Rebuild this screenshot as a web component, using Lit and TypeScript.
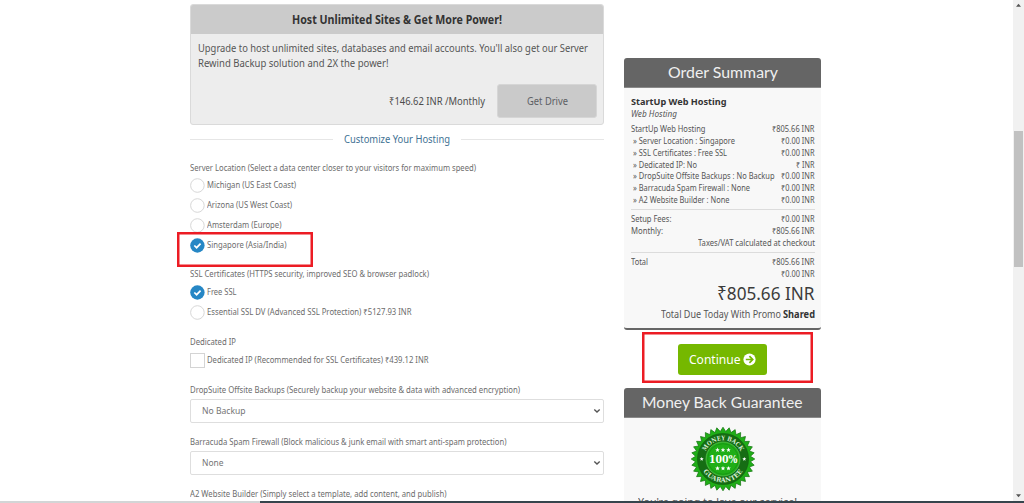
import { LitElement, html, svg, css } from "lit";
import { customElement, property } from "lit/decorators.js";

/** Single line of text condensed horizontally to a given measure. */
@customElement("fit-text")
class FitText extends LitElement {
  @property({ type: Number }) w = 0;
  static styles = css`
    :host { display: block; flex: none; white-space: nowrap; }
    span { display: inline-block; transform-origin: 0 50%; white-space: pre; vertical-align: top; }
  `;
  updated() {
    const s = this.renderRoot.querySelector("span") as HTMLElement;
    this.style.width = `${this.w}px`;
    s.style.transform = "none";
    const natural = s.getBoundingClientRect().width;
    if (natural) s.style.transform = `scaleX(${this.w / natural})`;
  }
  render() {
    return html`<span>${this.textContent}</span>`;
  }
}

const t = (text: string, w: number, cls = "") => html`<fit-text class=${cls} .w=${w}>${text}</fit-text>`;

@customElement("guarantee-seal")
class GuaranteeSeal extends LitElement {
  static styles = css`
    :host { display: block; width: 64px; height: 64px; flex: none; }
    svg { display: block; overflow: visible; }
    text { font-family: "DejaVu Serif", serif; font-weight: bold; fill: #fff; }
    .ring { font-size: 6.3px; fill: #d9efd6; }
    .pct { font-size: 11.5px; }
  `;
  private star(x: number, y: number, r: number) {
    const p = Array.from({ length: 10 }, (_, i) => {
      const a = (i * Math.PI) / 5 - Math.PI / 2;
      const q = i % 2 ? r * 0.45 : r;
      return `${(x + q * Math.cos(a)).toFixed(2)},${(y + q * Math.sin(a)).toFixed(2)}`;
    }).join(" ");
    return svg`<polygon points=${p} fill="#fff"/>`;
  }
  render() {
    const n = 32;
    const edge = Array.from({ length: n * 2 }, (_, i) => {
      const a = (i * Math.PI) / n - Math.PI / 2;
      const r = i % 2 ? 27.6 : 31.8;
      return `${(r * Math.cos(a)).toFixed(2)},${(r * Math.sin(a)).toFixed(2)}`;
    }).join(" ");
    return html`<svg width="64" height="64" viewBox="-32 -32 64 64">
      <polygon points=${edge} fill="#1fae17" stroke="#12720f" stroke-width=".7"/>
      <circle r="25.6" fill="#166d14" stroke="#0e5a0d" stroke-width=".5"/>
      <circle r="17" fill="#1fae17" stroke="#5fc458" stroke-width=".7"/>
      <circle r="15.3" fill="none" stroke="#128a10" stroke-width=".6"/>
      <path id="up" d="M-18.8 0A18.8 18.8 0 0 1 18.8 0" fill="none"/>
      <path id="dn" d="M-23.3 0A23.3 23.3 0 0 0 23.3 0" fill="none"/>
      <text class="ring" text-anchor="middle"><textPath href="#up" startOffset="50%" textLength="43" lengthAdjust="spacingAndGlyphs">MONEY BACK</textPath></text>
      <text class="ring" text-anchor="middle"><textPath href="#dn" startOffset="50%" textLength="47" lengthAdjust="spacingAndGlyphs">GUARANTEE</textPath></text>
      <text class="pct" x="-14" y="4" textLength="28.5" lengthAdjust="spacingAndGlyphs">100%</text>
      ${this.star(-21.3, 0, 2.1)}${this.star(21.3, 0, 2.1)}
      ${[-5.5, 0, 5.5].map((x) => svg`${this.star(x, -9, 2.4)}${this.star(x, 9.3, 2.4)}`)}
    </svg>`;
  }
}

@customElement("app-root")
class AppRoot extends LitElement {
  static styles = css`
    :host { display: block; position: relative; width: 1024px; height: 503px; overflow: hidden; background: #fff;
      font-family: "Noto Sans", "Open Sans", sans-serif; font-size: 8.2px; line-height: 14px; color: #6c6c6c; }
    * { box-sizing: border-box; }
    .page { display: flex; height: 503px; align-items: flex-start; padding-left: 190px; }
    .main { width: 414px; padding-top: 4px; flex: none; }
    .side { width: 197px; margin-left: 20px; padding-top: 58px; flex: none; }
    .offer { height: 121px; background: #ededed; border: 1px solid #dadada; border-radius: 3px; overflow: hidden; }
    .offer-head { height: 29px; background: #cbcbcb; display: flex; justify-content: center; padding-top: 6px; color: #333;
      font-size: 12px; font-weight: 700; line-height: 18px; }
    .offer-body { padding: 7px 0 0 6.5px; font-size: 10.4px; line-height: 15px; color: #555; }
    .buy { display: flex; margin: 13px 6px 0 0; justify-content: flex-end; align-items: center; gap: 12px; color: #4c4c4c; }
    .drive { width: 100px; height: 34px; background: #cacaca; border: 1px solid #d6d6d6; border-radius: 3px; display: flex;
      align-items: center; justify-content: center; color: #5d6064; font-size: 10px; }
    .divider { display: flex; align-items: center; justify-content: space-between; height: 16px; margin-top: 6px; font-size: 10.4px; color: #417193; }
    .divider i { height: 1px; background: #e6e6e6; width: 143px; }
    .label { height: 14px; }
    .g1 { margin-top: 14px; } .g3 { margin-top: 12px; } .g4 { margin-top: 11.4px; } .g5 { margin-top: 13px; }
    .opts { padding-top: 1px; }
    .opts.loose { padding-top: 1.5px; }
    .loose .opt { height: 20px; }
    .opt { display: flex; height: 19.8px; align-items: center; gap: 2px; }
    .opt svg { flex: none; display: block; }
    .opt fit-text { margin-top: -1px; }
    .box { width: 15px; height: 15px; border: 1px solid #d4d4d4; background: #fff; }
    .select { height: 24px; margin-top: 2px; border: 1px solid #dedede; border-radius: 2px; display: flex; align-items: center;
      justify-content: space-between; padding: 0 2px 0 11px; font-size: 9.6px; color: #757575; }
    .head { height: 30px; background: #656565; border-bottom: 1px solid #8a8a8a; border-radius: 3px 3px 0 0; display: flex; justify-content: center;
      align-items: center; font-family: Lato, sans-serif; font-size: 14.6px; line-height: 20px; color: #f0f0f0; }
    .summary { height: 242px; background: #f8f8f8; border-bottom: 2px solid #666; border-radius: 0 0 3px 3px; padding: 7px 6.5px 0 7px; line-height: 11.75px; color: #555; }
    .plan { font-weight: 700; color: #333; font-size: 9.6px; line-height: 13px; }
    .kind { font-style: italic; font-size: 8.2px; line-height: 12px; margin-bottom: 3.4px; }
    .row { display: flex; justify-content: space-between; height: 11.75px; }
    .sub { padding-left: 2px; }
    .end { display: flex; justify-content: flex-end; }
    .rule { height: 1px; background: #dcdcdc; margin: 3.5px 0 3px; }
    .big { font-size: 18.4px; line-height: 26px; color: #3c3c3c; margin-top: 1px; }
    .due { font-size: 10.2px; line-height: 14px; gap: 2px; margin-top: 1px; }
    .due b { color: #333; }
    .cta { height: 58px; display: flex; justify-content: center; padding-top: 14px; }
    .go { width: 89px; height: 31px; background: #75b800; border-radius: 3px; display: flex; align-items: center; justify-content: center; gap: 3px;
      color: #fff; font-size: 12.6px; line-height: 20px; }
    .money { background: #f8f8f8; height: 90px; padding-top: 9px; display: flex; flex-direction: column; align-items: center; }
    .love { margin: 4px 10px 0 0; font-size: 10.6px; line-height: 14px; color: #555; }
    .bar { width: 11px; height: 501px; margin-left: auto; background: #f1f1f1; display: flex; flex-direction: column; align-items: center; padding-top: 3px; }
    .bar i { height: 136px; width: 9px; background: #c1c1c1; margin: 123px 0 226px; }
    .mark { position: absolute; border: 2px solid #ec1c24; box-shadow: inset 0 0 0 .5px #ec1c24; }
    .m1 { left: 177px; top: 232px; width: 136px; height: 35px; }
    .m2 { left: 642px; top: 332px; width: 171px; height: 51px; }
    .task { position: absolute; left: 0; right: 0; bottom: 0; height: 2px; background: #36454d; display: flex; }
    .task i { width: 260px; height: 2px; background: #d3d5d6; }
  `;

  private opt(text: string, w: number, on = false) {
    return html`<div class="opt"><svg width="15" height="15" viewBox="0 0 15 15">${
      on
        ? svg`<circle cx="7.4" cy="7.5" r="7.2" fill="#2687c5"/><path d="M4.3 7.5L6.6 9.7L10.6 5.6" fill="none" stroke="#fff" stroke-width="1.7"/>`
        : svg`<circle cx="7.4" cy="7.5" r="6.8" fill="#fff" stroke="#d2d2d2" stroke-width=".9"/>`
    }</svg>${t(text, w)}</div>`;
  }
  private select(text: string, w: number) {
    return html`<div class="select">${t(text, w)}<svg width="8" height="8" viewBox="0 0 8 8"><path d="M1.3 2.6L4 5.1L6.7 2.6" fill="none" stroke="#555" stroke-width="1.4"/></svg></div>`;
  }
  private row(a: string, aw: number, b: string, bw: number, sub = false) {
    return html`<div class="row ${sub ? "sub" : ""}">${t(a, aw)}${t(b, bw)}</div>`;
  }

  render() {
    const free = "₹0.00 INR";
    const total = "₹805.66 INR";
    return html`
      <div class="page">
        <div class="main">
          <div class="offer">
            <div class="offer-head">${t("Host Unlimited Sites & Get More Power!", 210)}</div>
            <div class="offer-body">
              ${t("Upgrade to host unlimited sites, databases and email accounts. You'll also get our Server", 390)}
              ${t("Rewind Backup solution and 2X the power!", 190.5)}
              <div class="buy">${t("₹146.62 INR /Monthly", 96)}<div class="drive">${t("Get Drive", 41)}</div></div>
            </div>
          </div>
          <div class="divider"><i></i>${t("Customize Your Hosting", 106)}<i></i></div>
          <div class="label g1">${t("Server Location (Select a data center closer to your visitors for maximum speed)", 286)}</div>
          <div class="opts">
            ${this.opt("Michigan (US East Coast)", 89)}${this.opt("Arizona (US West Coast)", 85)}
            ${this.opt("Amsterdam (Europe)", 74.5)}${this.opt("Singapore (Asia/India)", 79.5, true)}
          </div>
          <div class="label g3">${t("SSL Certificates (HTTPS security, improved SEO & browser padlock)", 239)}</div>
          <div class="opts loose">
            ${this.opt("Free SSL", 29.5, true)}${this.opt("Essential SSL DV (Advanced SSL Protection) ₹5127.93 INR", 204.5)}
          </div>
          <div class="label g3">${t("Dedicated IP", 46)}</div>
          <div class="opts loose"><div class="opt"><div class="box"></div>${t("Dedicated IP (Recommended for SSL Certificates) ₹439.12 INR", 221.5)}</div></div>
          <div class="label g5">${t("DropSuite Offsite Backups (Securely backup your website & data with advanced encryption)", 330)}</div>
          ${this.select("No Backup", 43.5)}
          <div class="label g3">${t("Barracuda Spam Firewall (Block malicious & junk email with smart anti-spam protection)", 316.5)}</div>
          ${this.select("None", 21.5)}
          <div class="label g4">${t("A2 Website Builder (Simply select a template, add content, and publish)", 256.5)}</div>
        </div>
        <div class="side">
          <div class="head">${t("Order Summary", 110)}</div>
          <div class="summary">
            ${t("StartUp Web Hosting", 95.5, "plan")}${t("Web Hosting", 46, "kind")}
            ${this.row("StartUp Web Hosting", 74.5, total, 42.5)}
            ${this.row("» Server Location : Singapore", 102, free, 33.5, true)}
            ${this.row("» SSL Certificates : Free SSL", 94, free, 33.5, true)}
            ${this.row("» Dedicated IP: No", 64, "₹ INR", 18.5, true)}
            ${this.row("» DropSuite Offsite Backups : No Backup", 141.5, free, 33.5, true)}
            ${this.row("» Barracuda Spam Firewall : None", 117, free, 33.5, true)}
            ${this.row("» A2 Website Builder : None", 96.5, free, 33.5, true)}
            <div class="rule"></div>
            ${this.row("Setup Fees:", 40.5, free, 33.5)}
            ${this.row("Monthly:", 32, total, 42.5)}
            <div class="end">${t("Taxes/VAT calculated at checkout", 117)}</div>
            <div class="rule"></div>
            ${this.row("Total", 17, total, 42.5)}
            <div class="end">${t(free, 33.5)}</div>
            <div class="end big">${t(total, 97.5)}</div>
            <div class="end due">${t("Total Due Today With Promo", 120)}<b>${t("Shared", 32)}</b></div>
          </div>
          <div class="cta"><div class="go">${t("Continue", 51.5)}<svg width="13" height="13" viewBox="0 0 13 13"><circle cx="6.5" cy="6.5" r="6.1" fill="#fff"/><path d="M2.8 6.5H9.6M6.4 3.2L9.7 6.5L6.4 9.8" fill="none" stroke="#75b800" stroke-width="1.7"/></svg></div></div>
          <div class="head">${t("Money Back Guarantee", 160.5)}</div>
          <div class="money"><guarantee-seal></guarantee-seal>${t("You're going to love our service!", 159, "love")}</div>
        </div>
        <div class="bar">
          <svg width="7" height="5" viewBox="0 0 7 5"><path d="M3.5 .8L6 3.8H1Z" fill="#555"/></svg>
          <i></i>
          <svg width="7" height="5" viewBox="0 0 7 5"><path d="M3.5 4.2L6 1.2H1Z" fill="#555"/></svg>
        </div>
      </div>
      <div class="mark m1"></div>
      <div class="mark m2"></div>
      <div class="task"><i></i></div>
    `;
  }
}
